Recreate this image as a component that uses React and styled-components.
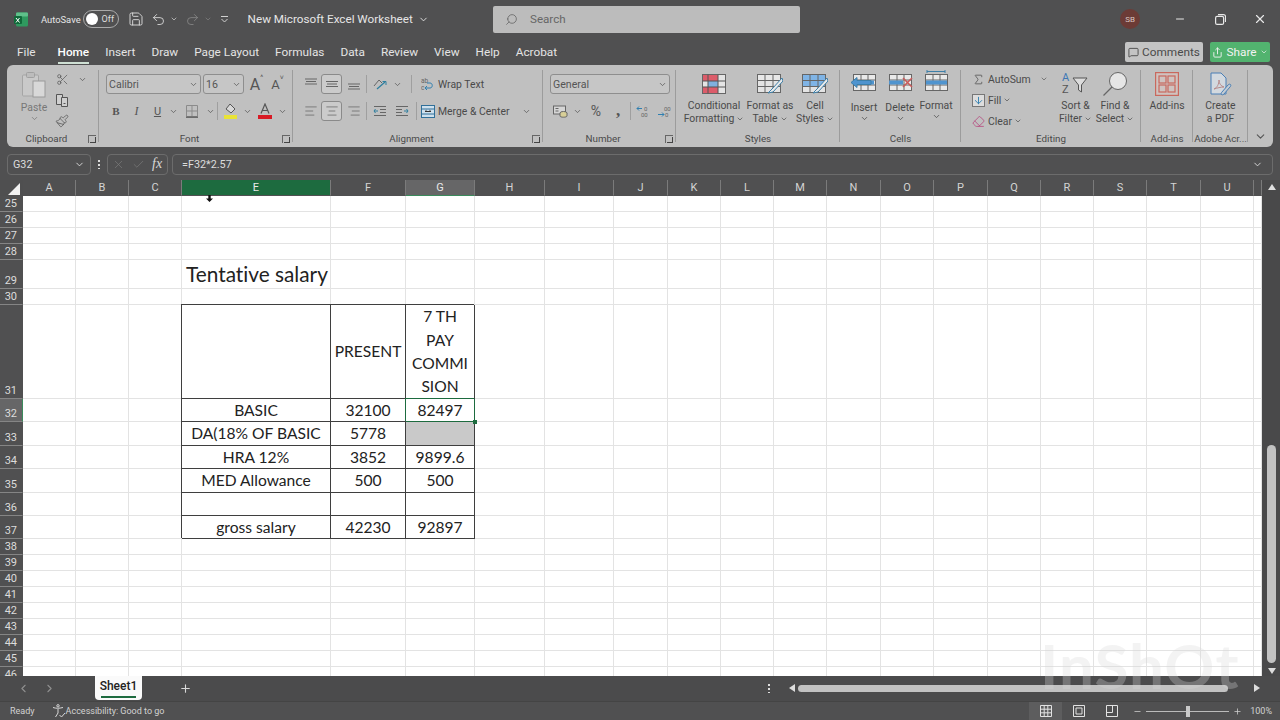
import React from 'react'
import styled, { createGlobalStyle } from 'styled-components'
import {
  Save, Undo2, Redo2, ChevronDown, ChevronLeft, ChevronRight, Search, Minus, X, Check, Plus,
  MessageSquare, Share, Scissors, Paintbrush, AlignLeft, AlignCenter, AlignRight, Sigma,
  ArrowDown, Eraser,
} from 'lucide-react'

const GlobalStyle = createGlobalStyle`
  html, body { margin: 0; padding: 0; background: #4f4f50; }
  * { box-sizing: border-box; }
  body { font-family: Roboto, "Liberation Sans", sans-serif; }
`

const Window = styled.div`
  width: 1280px;
  height: 720px;
  background: #505051;
  display: flex;
  flex-direction: column;
  position: relative;
  overflow: hidden;
`

/* title bar */
const TitleBar = styled.div`
  height: 38px;
  flex: none;
  display: flex;
  align-items: center;
  color: #e6e6e6;
`
const QuickAccess = styled.div`
  width: 493px;
  flex: none;
  padding-left: 14px;
  display: flex;
  align-items: center;
`
const SmallLabel = styled.span`
  font-size: 9.4px;
  margin-left: ${p => p.$ml || 0}px;
  white-space: nowrap;
`
const Toggle = styled.div`
  width: 36px;
  height: 18px;
  margin-left: 2px;
  border: 1px solid #aaa;
  border-radius: 9px;
  display: flex;
  align-items: center;
  padding-left: 2px;
  gap: 4px;
  font-size: 9px;
  color: #ddd;
`
const Knob = styled.span`
  width: 12px;
  height: 12px;
  border-radius: 50%;
  background: #fff;
`
const QatSlot = styled.span`
  width: ${p => p.$w}px;
  display: flex;
  justify-content: center;
  align-items: center;
  color: ${p => (p.$dim ? '#858585' : '#dcdcdc')};
  margin-left: ${p => p.$ml || 0}px;
`
const DocName = styled.span`
  font-size: 11.7px;
  margin-left: 16px;
  white-space: nowrap;
  display: flex;
  align-items: center;
  gap: 5px;
`
const SearchBox = styled.div`
  width: 307px;
  height: 27px;
  background: #bcbcbc;
  border-radius: 2px;
  display: flex;
  align-items: center;
  gap: 12px;
  padding-left: 12px;
  font-size: 11.6px;
  color: #666;
`
const WindowControls = styled.div`
  flex: 1;
  display: flex;
  justify-content: flex-end;
  align-items: center;
`
const Avatar = styled.div`
  width: 20px;
  height: 20px;
  border-radius: 50%;
  background: #6c3b36;
  color: #d9c4c0;
  font-size: 8px;
  display: flex;
  align-items: center;
  justify-content: center;
  margin-right: 20px;
`
const WinButton = styled.div`
  width: 40px;
  display: flex;
  justify-content: center;
  color: #e8e8e8;
`

/* tabs */
const TabBar = styled.div`
  height: 27px;
  flex: none;
  display: flex;
  align-items: flex-start;
  padding: 4px 10px 0 17px;
`
const Tab = styled.div`
  font-size: 11.8px;
  line-height: 20px;
  margin-right: 16px;
  color: ${p => (p.$active ? '#fff' : '#e4e4e4')};
  font-weight: ${p => (p.$active ? 500 : 400)};
  border-bottom: 2px solid ${p => (p.$active ? '#cfe0d4' : 'transparent')};
  white-space: nowrap;
`
const TabSpacer = styled.div`
  flex: 1;
`
const HeadButton = styled.div`
  height: 20px;
  width: ${p => p.$w}px;
  margin-left: ${p => p.$ml || 0}px;
  border-radius: 2px;
  background: ${p => p.$bg};
  color: ${p => p.$color};
  font-size: 11.8px;
  display: flex;
  align-items: center;
  justify-content: center;
  gap: 3px;
`

/* ribbon */
const Ribbon = styled.div`
  height: 82px;
  flex: none;
  margin: 0 7px;
  background: #c0c0c0;
  border-radius: 6px;
  display: flex;
  color: #454545;
  font-size: 10.4px;
`
const Group = styled.div`
  width: ${p => p.$w}px;
  flex: none;
  display: flex;
  flex-direction: column;
  position: relative;
  padding: 4px 0 0;
  &::after {
    content: '';
    position: absolute;
    right: 0;
    top: 5px;
    bottom: 5px;
    width: 1px;
    background: #9c9c9c;
  }
`
const GroupBody = styled.div`
  flex: 1;
  display: flex;
  padding-left: ${p => p.$pl || 0}px;
  min-height: 0;
`
const GroupLabel = styled.div`
  height: 16px;
  line-height: 16px;
  text-align: center;
  font-size: 9.8px;
  color: #4a4a4a;
  white-space: nowrap;
  position: relative;
  padding-right: ${p => (p.$launcher ? 13 : 0)}px;
`
const Launcher = styled.span`
  position: absolute;
  right: 3px;
  top: 4px;
  width: 8px;
  height: 8px;
  border-left: 1px solid #666;
  border-top: 1px solid #666;
  &::after {
    content: '';
    position: absolute;
    right: 0;
    bottom: 0;
    width: 5px;
    height: 5px;
    border-right: 1px solid #444;
    border-bottom: 1px solid #444;
  }
`
const Rows = styled.div`
  display: flex;
  flex-direction: column;
  gap: 7px;
  padding-top: 5px;
`
const Row = styled.div`
  height: 20px;
  display: flex;
  align-items: center;
`
const Slot = styled.span`
  width: ${p => p.$w}px;
  height: 20px;
  flex: none;
  display: flex;
  align-items: center;
  justify-content: center;
  color: #555;
  font-family: ${p => (p.$serif ? '"Liberation Serif", serif' : 'inherit')};
  font-size: ${p => p.$size || 11}px;
  font-weight: ${p => p.$weight || 400};
  font-style: ${p => (p.$italic ? 'italic' : 'normal')};
  text-decoration: ${p => (p.$under ? 'underline' : 'none')};
  border: ${p => (p.$boxed ? '1px solid #8a8a8a' : 'none')};
  border-radius: 3px;
  background: ${p => (p.$boxed ? '#cbcbcb' : 'transparent')};
`
const VSep = styled.span`
  width: 1px;
  height: 18px;
  flex: none;
  background: #9f9f9f;
  margin: 0 ${p => p.$m || 2}px;
`
const Select = styled.div`
  width: ${p => p.$w}px;
  height: 20px;
  flex: none;
  margin-right: ${p => p.$mr || 0}px;
  border: 1px solid #8e8e8e;
  border-radius: 3px;
  background: #c6c6c6;
  display: flex;
  align-items: center;
  justify-content: space-between;
  padding: 0 2px;
  font-size: 10.6px;
  color: #555;
`
const TextAction = styled.span`
  display: flex;
  align-items: center;
  gap: 2px;
  white-space: nowrap;
  font-size: 10.4px;
  color: #4a4a4a;
  margin-left: ${p => p.$ml || 0}px;
`
const BigButton = styled.div`
  width: ${p => p.$w}px;
  flex: none;
  display: flex;
  flex-direction: column;
  align-items: center;
  text-align: center;
  line-height: 13.4px;
  white-space: nowrap;
  color: #4a4a4a;
`
const BigIcon = styled.div`
  height: ${p => p.$h || 30}px;
  padding-top: ${p => p.$pt || 0}px;
  flex: none;
  display: flex;
  align-items: flex-start;
  justify-content: center;
`
const SmallColumn = styled.div`
  width: ${p => p.$w}px;
  flex: none;
  display: flex;
  flex-direction: column;
  align-items: ${p => p.$align || 'center'};
  gap: 1px;
`
const CollapseBox = styled.div`
  flex: 1;
  display: flex;
  align-items: flex-end;
  justify-content: center;
  padding-bottom: 4px;
  color: #555;
`

/* formula bar */
const FormulaBar = styled.div`
  height: 33px;
  flex: none;
  display: flex;
  align-items: center;
  padding: 1px 7px 0;
  color: #ddd;
  font-size: 10.8px;
`
const BarBox = styled.div`
  height: 21px;
  width: ${p => p.$w || 'auto'}px;
  flex: ${p => (p.$grow ? 1 : 'none')};
  margin-left: ${p => p.$ml || 0}px;
  border: 1px solid #6c6c6c;
  border-radius: 4px;
  display: flex;
  align-items: center;
  justify-content: ${p => p.$justify || 'flex-start'};
  padding: 0 ${p => p.$px ?? 5}px;
  gap: ${p => p.$gap || 0}px;
`
const Dots = styled.span`
  width: 2px;
  height: 10px;
  margin-left: ${p => p.$ml ?? 7}px;
  background: radial-gradient(circle, #ddd 1px, transparent 1px) 0 0 / 2px 4px;
`
const FxText = styled.span`
  font-family: "Liberation Serif", serif;
  font-style: italic;
  font-size: 14px;
  color: #d8d8d8;
`

/* sheet */
const SheetArea = styled.div`
  height: 496px;
  flex: none;
  display: flex;
`
const Grid = styled.div`
  width: 1262px;
  height: 496px;
  flex: none;
  display: grid;
  grid-template-columns: ${p => p.$cols};
  grid-template-rows: ${p => p.$rows};
  overflow: hidden;
  background: #fff;
`
const Corner = styled.div`
  background: #4f4f50;
  display: flex;
  justify-content: flex-end;
  align-items: flex-end;
  padding: 0 3px 1px 0;
`
const ColHead = styled.div`
  background: ${p => (p.$state === 'green' ? '#1d6b3f' : p.$state === 'light' ? '#666667' : '#505051')};
  color: ${p => (p.$state ? '#e9e9e9' : '#d4d4d4')};
  border-right: 1px solid #7b7b7b;
  border-bottom: 1px solid ${p => (p.$state === 'light' ? '#3b8a5c' : '#505051')};
  font-size: 11px;
  line-height: 15px;
  text-align: center;
`
const RowHead = styled.div`
  background: ${p => (p.$active ? '#666667' : '#505051')};
  color: #dcdcdc;
  border-bottom: 1px solid #858585;
  border-right: 1px solid ${p => (p.$active ? '#3b8a5c' : '#505051')};
  font-size: 11px;
  padding-right: 5px;
  display: flex;
  align-items: flex-end;
  justify-content: flex-end;
  line-height: 15px;
`
const Cell = styled.div`
  border-right: 1px solid ${p => (p.$boxed ? '#3f3f3f' : '#e3e3e3')};
  border-bottom: 1px solid ${p => (p.$boxed ? '#3f3f3f' : '#e3e3e3')};
  background: ${p => (p.$fill ? '#c9c9c9' : '#fff')};
  box-shadow: ${p => (p.$boxed ? '-1px -1px 0 #3f3f3f' : 'none')};
  position: ${p => (p.$boxed ? 'relative' : 'static')};
  z-index: ${p => (p.$boxed ? 1 : 'auto')};
  padding-top: ${p => (p.$boxed ? 1 : 0)}px;
  font-family: Lato, "Liberation Sans", sans-serif;
  font-variant-ligatures: none;
  font-size: 15.6px;
  color: #222;
  display: flex;
  align-items: center;
  justify-content: center;
  text-align: center;
  line-height: 23.4px;
  white-space: pre-line;
  min-width: 0;
`
const TitleCell = styled(Cell)`
  justify-content: flex-start;
  padding-left: 4px;
  font-size: 20.8px;
  white-space: nowrap;
  overflow: visible;
`
const SelectedCell = styled(Cell)`
  z-index: 2;
  border-right-color: #1d6b3f;
  border-bottom-color: #1d6b3f;
  box-shadow: -1px -1px 0 #1d6b3f;
  &::after {
    content: '';
    position: absolute;
    right: -3px;
    bottom: -3px;
    width: 4px;
    height: 4px;
    background: #1d6b3f;
  }
`
const ColumnCursor = styled.span`
  position: absolute;
  left: 206px;
  top: 195px;
  z-index: 3;
  display: flex;
`
const VScroll = styled.div`
  flex: 1;
  display: flex;
  flex-direction: column;
  align-items: center;
  padding: 4px 0 2px 1px;
  background: #49494a;
`
const Arrow = styled.span`
  width: 0;
  height: 0;
  border-left: 4px solid transparent;
  border-right: 4px solid transparent;
  ${p => (p.$down ? 'border-top: 6px solid #ddd;' : 'border-bottom: 6px solid #ddd;')}
  flex: none;
`
const VSpacer = styled.div`
  flex: 1;
`
const VThumb = styled.div`
  width: 9px;
  height: 218px;
  border-radius: 5px;
  background: #c2c2c2;
  margin-bottom: 5px;
`

/* bottom */
const SheetBar = styled.div`
  height: 26px;
  flex: none;
  background: #4b4b4c;
  display: flex;
  align-items: flex-start;
  color: #8f8f8f;
  border-bottom: 1px solid #444;
`
const NavArrows = styled.div`
  width: 95px;
  height: 24px;
  flex: none;
  display: flex;
  align-items: center;
  padding-left: 17px;
  gap: 13px;
`
const SheetTab = styled.div`
  width: 47px;
  height: 24px;
  flex: none;
  background: #fafafa;
  border-radius: 0 0 4px 4px;
  color: #222;
  font-size: 12px;
  font-weight: 500;
  text-align: center;
  line-height: 21px;
  position: relative;
  &::after {
    content: '';
    position: absolute;
    left: 6px;
    right: 6px;
    bottom: 2px;
    height: 2px;
    background: #1d6b3f;
  }
`
const AddSheet = styled.div`
  width: 86px;
  height: 24px;
  flex: none;
  display: flex;
  align-items: center;
  justify-content: center;
  color: #d8d8d8;
`
const TabsGap = styled.div`
  flex: 1;
`
const ScrollDots = styled.div`
  height: 24px;
  width: 30px;
  flex: none;
  display: flex;
  align-items: center;
  justify-content: center;
`
const HScroll = styled.div`
  width: 490px;
  height: 24px;
  flex: none;
  margin-right: 6px;
  display: flex;
  align-items: center;
  padding-left: 5px;
`
const HArrow = styled.span`
  width: 0;
  height: 0;
  flex: none;
  border-top: 4px solid transparent;
  border-bottom: 4px solid transparent;
  ${p => (p.$right ? 'border-left: 6px solid #ddd;' : 'border-right: 6px solid #ddd;')}
`
const HThumb = styled.div`
  width: 430px;
  height: 7px;
  margin: 0 26px 0 3px;
  border-radius: 4px;
  background: #c2c2c2;
`
const StatusBar = styled.div`
  flex: 1;
  display: flex;
  align-items: center;
  padding: 0 8px 0 10px;
  font-size: 9px;
  color: #d2d2d2;
  white-space: nowrap;
`
const StatusGroup = styled.div`
  display: flex;
  align-items: center;
  margin-left: ${p => p.$ml || 0}px;
  gap: ${p => p.$gap || 0}px;
`
const ViewGroup = styled.div`
  display: flex;
  align-items: center;
  margin-left: auto;
  margin-right: 5px;
`
const ViewButton = styled.div`
  width: 33px;
  height: 18px;
  display: flex;
  align-items: center;
  justify-content: center;
  background: ${p => (p.$active ? '#5d5d5e' : 'transparent')};
  color: #e2e2e2;
`
const ZoomTrack = styled.div`
  width: 83px;
  height: 1px;
  margin: 0 4px;
  background: #bbb;
  position: relative;
`
const ZoomThumb = styled.span`
  position: absolute;
  left: 40px;
  top: -5px;
  width: 4px;
  height: 11px;
  background: #c9c9c9;
`
const Watermark = styled.div`
  position: absolute;
  left: 1040px;
  top: 625px;
  font-family: Lato, "Liberation Sans", sans-serif;
  font-weight: 700;
  font-size: 62px;
  line-height: 80px;
  letter-spacing: 1px;
  color: rgba(214, 214, 214, 0.3);
  pointer-events: none;
  z-index: 5;
`

const Chev = ({ size = 9, color = 'currentColor' }) => <ChevronDown size={size} color={color} strokeWidth={2} />

const ExcelLogo = () => (
  <svg width="14" height="15" viewBox="0 0 14 15">
    <rect x="2" y="0.5" width="12" height="14" rx="1.5" fill="#2f9a5f" />
    <rect x="2" y="0.5" width="12" height="4" rx="1" fill="#5fc08a" />
    <rect x="0" y="4" width="8" height="8" rx="1" fill="#106a3a" />
    <path d="M2 6l3.5 4.5M5.5 6L2 10.5" stroke="#fff" strokeWidth="1" />
  </svg>
)
const QatMenu = () => (
  <svg width="9" height="9" viewBox="0 0 9 9" fill="none" stroke="#d0d0d0">
    <path d="M1 1.5h7" /><path d="M1.5 4l3 3 3-3" />
  </svg>
)
const PasteIcon = () => (
  <svg width="24" height="26" viewBox="0 0 24 26">
    <rect x="0.5" y="3" width="16" height="21" rx="1" fill="#c9c9c9" stroke="#a5a5a5" />
    <rect x="4.5" y="0.5" width="8" height="5" rx="1" fill="#bcbcbc" stroke="#a0a0a0" />
    <rect x="11" y="9" width="12" height="16" fill="#d8d8d8" stroke="#9a9a9a" />
  </svg>
)
const CopyIcon = () => (
  <svg width="15" height="15" viewBox="0 0 15 15" fill="#cfcfcf" stroke="#555">
    <path d="M1.5 1.5h6v10h-6z" /><path d="M6.5 4.5h6v9h-6z" /><path d="M8.5 10.5h2" />
  </svg>
)
const GrowFont = ({ down }) => (
  <Slot $w={21} $size={down ? 13 : 16}>A<sub style={{ fontSize: 7, alignSelf: 'flex-start' }}>{down ? '˅' : '^'}</sub></Slot>
)
const BordersIcon = () => (
  <svg width="13" height="13" viewBox="0 0 13 13" fill="none" stroke="#8b8b8b">
    <path d="M.5.5h11v11h-11zM6 .5v11M.5 6h11" /><path d="M0 12.2h12" stroke="#444" />
  </svg>
)
const FillIcon = () => (
  <svg width="14" height="16" viewBox="0 0 14 16">
    <path d="M6 1l5 5-4 4-5-4z" fill="#d8d8d8" stroke="#555" />
    <rect x="0" y="12" width="13" height="4" fill="#e9e337" />
  </svg>
)
const FontColorIcon = () => (
  <svg width="14" height="16" viewBox="0 0 14 16" fill="none">
    <path d="M3 10.5L7 1l4 9.5M4.5 7.5h5" stroke="#555" strokeWidth="1.2" />
    <rect x="0" y="12" width="14" height="4" fill="#d81a24" />
  </svg>
)
const VAlignLines = ({ offset }) => (
  <svg width="14" height="12" viewBox="0 0 14 12" stroke="#666" strokeWidth="1.1">
    <path d={`M1 ${1 + offset}h12M2 ${3.5 + offset}h10M1 ${6 + offset}h12`} />
  </svg>
)
const OrientIcon = () => (
  <svg width="14" height="13" viewBox="0 0 14 13" fill="none">
    <path d="M1 8l5-6 3 3" stroke="#666" /><path d="M4 11l8-7" stroke="#2f7f9f" strokeWidth="1.3" />
    <path d="M9.5 3.5H13V7" stroke="#2f7f9f" />
  </svg>
)
const IndentIcon = ({ flip }) => (
  <svg width="13" height="12" viewBox="0 0 13 12" fill="none" stroke="#666" style={{ transform: flip ? 'scaleX(-1)' : 'none' }}>
    <path d="M1 1.5h12M7 4.5h6M7 7.5h6M1 10.5h12" />
    <path d="M5 6H1M2.5 4L1 6l1.5 2" stroke="#2f7f9f" />
  </svg>
)
const WrapIcon = () => (
  <svg width="13" height="14" viewBox="0 0 13 14" fill="none">
    <text x="0" y="6" fontSize="6.5" fill="#666" fontFamily="Roboto">ab</text>
    <text x="0" y="13" fontSize="6.5" fill="#666" fontFamily="Roboto">c</text>
    <path d="M4 11h5c3 0 3-5 0-5H6M6 9l-2 2 2 2" stroke="#2f7fb0" />
  </svg>
)
const MergeIcon = () => (
  <svg width="14" height="13" viewBox="0 0 14 13" fill="#cfe1ee" stroke="#2f6f99">
    <rect x=".5" y=".5" width="13" height="12" />
    <path d="M.5 4h13M.5 9h13" /><path d="M4 6.5h6M4 6.5l1.5-1.2M10 6.5L8.5 5.3" stroke="#333" />
  </svg>
)
const AccountingIcon = () => (
  <svg width="15" height="13" viewBox="0 0 15 13" fill="none" stroke="#666">
    <rect x=".5" y="1" width="12" height="8" fill="#d5d5d5" />
    <path d="M2.5 3.5h3M2.5 6h3" />
    <ellipse cx="10.5" cy="8" rx="3.5" ry="1.5" fill="#d8cf97" />
    <path d="M7 8v3c0 1.6 7 1.6 7 0V8" fill="#d8cf97" />
  </svg>
)
const DecimalIcon = ({ more }) => (
  <svg width="14" height="13" viewBox="0 0 14 13">
    <text x={more ? 8 : 7} y="5.5" fontSize="6" fill="#666" fontFamily="Roboto">{more ? '0' : '00'}</text>
    <text x={more ? 5 : 8} y="12" fontSize="6" fill="#666" fontFamily="Roboto">{more ? '00' : '0'}</text>
    <path d={more ? 'M1 3.5h5M1 3.5l2-2M1 3.5l2 2' : 'M1 9.5h6M7 9.5l-2-2M7 9.5l-2 2'} stroke="#2f7fb0" fill="none" />
  </svg>
)
const TableGlyph = ({ head = '#e8e8e8', band, brush }) => (
  <svg width="26" height="20" viewBox="0 0 26 20" fill="none">
    <rect x=".5" y=".5" width="23" height="18" fill="#e4e4e4" stroke="#666" />
    <rect x="1" y="1" width="22" height="5" fill={head} />
    {band && <rect x="1" y="7" width="22" height="5" fill={band} />}
    <path d="M.5 6.5h23M.5 12.5h23M8 .5v18M16 .5v18" stroke="#666" />
    {brush && <path d="M25 4L15 15l-4 4 5-1L26 7z" fill="#e9e9e9" stroke="#3d7fa8" />}
  </svg>
)
const CondIcon = () => (
  <svg width="24" height="20" viewBox="0 0 24 20" fill="none">
    <rect x=".5" y=".5" width="23" height="19" fill="#e4e4e4" stroke="#666" />
    <rect x="1" y="1" width="15" height="6" fill="#dc5c6a" />
    <rect x="1" y="13" width="15" height="6" fill="#dc5c6a" />
    <rect x="6" y="7" width="10" height="6" fill="#7fb0dd" />
    <path d="M.5 7h23M.5 13h23M6 .5v19M16 .5v19" stroke="#555" />
  </svg>
)
const CellOpIcon = ({ kind }) => (
  <svg width="28" height="22" viewBox="0 0 28 22" fill="none">
    {kind === 'format' && <path d="M5 1.5h18M5 0v3M23 0v3" stroke="#3d7fa8" />}
    <rect x="3.5" y="4.5" width="22" height="16" fill="#e9e9e9" stroke="#666" />
    <path d="M3.5 10h22M3.5 15h22M11 4.5v16M18 4.5v16" stroke="#666" />
    <rect x={kind === 'format' ? 4 : 3} y="10.5" width={kind === 'delete' ? 14 : 21} height="4" fill="#4f94cf" />
    {kind === 'insert' && <path d="M1 12.5l6-5v3h14v4H7v3z" fill="#4f94cf" stroke="#3d7fa8" />}
    {kind === 'delete' && <path d="M17 8l9 9M26 8l-9 9" stroke="#c85a5a" strokeWidth="1.6" />}
  </svg>
)
const SortIcon = () => (
  <svg width="28" height="24" viewBox="0 0 28 24" fill="none">
    <text x="0" y="10" fontSize="11" fill="#3d78b5" fontFamily="Roboto">A</text>
    <text x="0" y="22" fontSize="11" fill="#555" fontFamily="Roboto">Z</text>
    <path d="M11 7h14l-5.5 7v7l-3-2v-5z" fill="#dcdcdc" stroke="#555" />
  </svg>
)
const FindIcon = () => (
  <svg width="26" height="26" viewBox="0 0 26 26" fill="none" stroke="#666">
    <circle cx="16" cy="10" r="8.5" fill="#e6e6e6" />
    <path d="M10 16L1.5 24.5" strokeWidth="1.3" />
  </svg>
)
const AddInsIcon = () => (
  <svg width="24" height="24" viewBox="0 0 24 24" fill="none" stroke="#c9685d" strokeWidth="1.2">
    <rect x=".6" y=".6" width="22.8" height="22.8" fill="#cfc3c0" />
    <rect x="4" y="4" width="7" height="7" /><rect x="13" y="4" width="7" height="7" />
    <rect x="4" y="13" width="7" height="7" /><rect x="13" y="13" width="7" height="7" />
  </svg>
)
const PdfIcon = () => (
  <svg width="22" height="26" viewBox="0 0 22 26" fill="none" stroke="#4a7fb5">
    <path d="M1 1h10l5 5v16H1z" fill="#d3d9df" />
    <path d="M4 17c3-1 5-5 5-9 0 4 2 6 5 7-3 0-7 1-10 2z" stroke="#b78a8a" />
    <path d="M12 20l6-7c2-2 4 0 2 2l-6 7c-2 2-4 0-2-2z" fill="#c3ccd4" />
  </svg>
)
const A11yIcon = () => (
  <svg width="14" height="14" viewBox="0 0 14 14" fill="none" stroke="#d8d8d8">
    <circle cx="6" cy="1.8" r="1.2" /><path d="M1 3.5c3 1 6 1 10 0M6 5v4M6 9l-2.5 4" />
    <path d="M7.5 11l2 2 3.5-4" />
  </svg>
)
const NormalView = () => (
  <svg width="12" height="12" viewBox="0 0 12 12" fill="none" stroke="currentColor">
    <path d="M.5.5h11v11H.5zM.5 4.2h11M.5 7.8h11M4.2.5v11M7.8.5v11" />
  </svg>
)
const PageView = () => (
  <svg width="12" height="12" viewBox="0 0 12 12" fill="none" stroke="currentColor">
    <path d="M.5.5h11v11H.5z" /><path d="M3 3h6v6H3z" />
  </svg>
)
const BreakView = () => (
  <svg width="12" height="12" viewBox="0 0 12 12" fill="none" stroke="currentColor">
    <path d="M.5.5h11v11H.5zM.5 7.5h6V.5" />
  </svg>
)
const RestoreIcon = () => (
  <svg width="11" height="11" viewBox="0 0 11 11" fill="none" stroke="currentColor" strokeWidth="1.2">
    <rect x=".6" y="2.4" width="8" height="8" rx="1.5" /><path d="M3 .6h5.5c1 0 2 1 2 2V8" />
  </svg>
)
const CornerTriangle = () => (
  <svg width="12" height="12" viewBox="0 0 12 12"><path d="M12 0v12H0z" fill="#f2f2f2" /></svg>
)
const DownCursor = () => (
  <svg width="7" height="7" viewBox="0 0 7 7"><path d="M2.3 0h2.4v3.6H7L3.5 7 0 3.6h2.3z" fill="#111" /></svg>
)

const TABS = ['Home', 'Insert', 'Draw', 'Page Layout', 'Formulas', 'Data', 'Review', 'View', 'Help', 'Acrobat']

const COLS = [
  ['A', 53], ['B', 53], ['C', 53], ['E', 149], ['F', 75], ['G', 69], ['H', 70], ['I', 69], ['J', 54], ['K', 53],
  ['L', 53], ['M', 53], ['N', 54], ['O', 53], ['P', 54], ['Q', 53], ['R', 53], ['S', 53], ['T', 54], ['U', 53], ['', 8],
]
const ROWS = [
  [25, 16], [26, 16], [27, 16], [28, 16], [29, 29], [30, 16], [31, 94], [32, 23], [33, 24], [34, 23], [35, 24],
  [36, 23], [37, 23], [38, 16], [39, 16], [40, 16], [41, 16], [42, 16], [43, 16], [44, 16], [45, 16], [46, 16],
]
const TABLE = {
  31: ['', 'PRESENT', '7 TH\nPAY\nCOMMI\nSION'],
  32: ['BASIC', '32100', '82497'],
  33: ['DA(18% OF BASIC', '5778', ''],
  34: ['HRA 12%', '3852', '9899.6'],
  35: ['MED Allowance', '500', '500'],
  36: ['', '', ''],
  37: ['gross salary', '42230', '92897'],
}
const COL_STATE = { E: 'green', G: 'light' }

const renderCell = (col, row) => {
  const key = `${col}${row}`
  if (key === 'E29') return <TitleCell key={key}>Tentative salary</TitleCell>
  const idx = ['E', 'F', 'G'].indexOf(col)
  if (TABLE[row] && idx >= 0) {
    if (key === 'G32') return <SelectedCell key={key} $boxed>{TABLE[row][idx]}</SelectedCell>
    return <Cell key={key} $boxed $fill={key === 'G33'}>{TABLE[row][idx]}</Cell>
  }
  return <Cell key={key} />
}

const App = () => (
  <Window>
    <GlobalStyle />
    <TitleBar>
      <QuickAccess>
        <ExcelLogo />
        <SmallLabel $ml={13}>AutoSave</SmallLabel>
        <Toggle><Knob />Off</Toggle>
        <QatSlot $w={20} $ml={7}><Save size={16} strokeWidth={1.4} /></QatSlot>
        <QatSlot $w={18} $ml={4}><Undo2 size={15} strokeWidth={1.4} /></QatSlot>
        <QatSlot $w={12}><Chev size={8} /></QatSlot>
        <QatSlot $w={18} $ml={4} $dim><Redo2 size={15} strokeWidth={1.4} /></QatSlot>
        <QatSlot $w={12} $dim><Chev size={8} /></QatSlot>
        <QatSlot $w={14} $ml={4}><QatMenu /></QatSlot>
        <DocName>New Microsoft Excel Worksheet <ChevronDown size={11} /></DocName>
      </QuickAccess>
      <SearchBox><Search size={13} strokeWidth={1.5} style={{ transform: 'scaleX(-1)' }} />Search</SearchBox>
      <WindowControls>
        <Avatar>SB</Avatar>
        <WinButton><Minus size={12} /></WinButton>
        <WinButton><RestoreIcon /></WinButton>
        <WinButton><X size={14} /></WinButton>
      </WindowControls>
    </TitleBar>

    <TabBar>
      <Tab style={{ marginRight: 22 }}>File</Tab>
      {TABS.map(t => <Tab key={t} $active={t === 'Home'}>{t}</Tab>)}
      <TabSpacer />
      <HeadButton $w={78} $bg="#c4c4c4" $color="#4a4a4a"><MessageSquare size={11} />Comments</HeadButton>
      <HeadButton $w={60} $ml={7} $bg="#52b36f" $color="#f2f2f2"><Share size={11} />Share <Chev size={8} /></HeadButton>
    </TabBar>

    <Ribbon>
      <Group $w={92}>
        <GroupBody $pl={10}>
          <BigButton $w={34}>
            <BigIcon $h={32} $pt={3}><PasteIcon /></BigIcon>
            <span style={{ color: '#777' }}>Paste</span>
            <Chev color="#777" />
          </BigButton>
          <SmallColumn $w={22}>
            <Slot $w={20}><Scissors size={13} strokeWidth={1.3} /></Slot>
            <Slot $w={20}><CopyIcon /></Slot>
            <Slot $w={20}><Paintbrush size={14} strokeWidth={1.3} /></Slot>
          </SmallColumn>
          <Slot $w={18}><Chev /></Slot>
        </GroupBody>
        <GroupLabel $launcher>Clipboard<Launcher /></GroupLabel>
      </Group>

      <Group $w={194}>
        <GroupBody $pl={7}>
          <Rows>
            <Row>
              <Select $w={95} $mr={2}>Calibri<Chev /></Select>
              <Select $w={41} $mr={2}>16<Chev /></Select>
              <GrowFont />
              <GrowFont down />
            </Row>
            <Row>
              <Slot $w={20} $serif $weight={700} $size={11}>B</Slot>
              <Slot $w={21} $serif $italic $size={12}>I</Slot>
              <Slot $w={21} $under>U</Slot>
              <Slot $w={11}><Chev /></Slot>
              <Slot $w={26}><BordersIcon /></Slot>
              <Slot $w={10}><Chev /></Slot>
              <VSep />
              <Slot $w={22}><FillIcon /></Slot>
              <Slot $w={10}><Chev /></Slot>
              <Slot $w={26}><FontColorIcon /></Slot>
              <Slot $w={9}><Chev /></Slot>
            </Row>
          </Rows>
        </GroupBody>
        <GroupLabel $launcher>Font<Launcher /></GroupLabel>
      </Group>

      <Group $w={250}>
        <GroupBody $pl={7}>
          <Rows>
            <Row>
              <Slot $w={21}><VAlignLines offset={0} /></Slot>
              <Slot $w={21} $boxed><VAlignLines offset={2.5} /></Slot>
              <Slot $w={23}><VAlignLines offset={5} /></Slot>
              <VSep $m={1} />
              <Slot $w={23}><OrientIcon /></Slot>
              <Slot $w={12}><Chev /></Slot>
              <VSep $m={8} />
              <Slot $w={14}><WrapIcon /></Slot>
              <TextAction $ml={4}>Wrap Text</TextAction>
            </Row>
            <Row>
              <Slot $w={21}><AlignLeft size={14} strokeWidth={1.1} /></Slot>
              <Slot $w={21} $boxed><AlignCenter size={14} strokeWidth={1.1} /></Slot>
              <Slot $w={23}><AlignRight size={14} strokeWidth={1.1} /></Slot>
              <VSep $m={1} />
              <Slot $w={23}><IndentIcon /></Slot>
              <Slot $w={22}><IndentIcon flip /></Slot>
              <VSep $m={3} />
              <Slot $w={16}><MergeIcon /></Slot>
              <TextAction $ml={2}>Merge &amp; Center</TextAction>
              <Slot $w={34}><Chev /></Slot>
            </Row>
          </Rows>
        </GroupBody>
        <GroupLabel $launcher>Alignment<Launcher /></GroupLabel>
      </Group>

      <Group $w={133}>
        <GroupBody $pl={7}>
          <Rows>
            <Row><Select $w={120}>General<Chev /></Select></Row>
            <Row>
              <Slot $w={20}><AccountingIcon /></Slot>
              <Slot $w={14}><Chev /></Slot>
              <Slot $w={24} $size={14}>%</Slot>
              <Slot $w={20} $weight={700} $size={17} $serif>,</Slot>
              <VSep $m={2} />
              <Slot $w={20}><DecimalIcon more /></Slot>
              <Slot $w={22}><DecimalIcon /></Slot>
            </Row>
          </Rows>
        </GroupBody>
        <GroupLabel $launcher>Number<Launcher /></GroupLabel>
      </Group>

      <Group $w={164}>
        <GroupBody $pl={8}>
          <BigButton $w={60}>
            <BigIcon $pt={5}><CondIcon /></BigIcon>
            <span>Conditional</span>
            <TextAction>Formatting <Chev size={8} /></TextAction>
          </BigButton>
          <BigButton $w={52}>
            <BigIcon $pt={5}><TableGlyph brush /></BigIcon>
            <span>Format as</span>
            <TextAction>Table <Chev size={8} /></TextAction>
          </BigButton>
          <BigButton $w={38}>
            <BigIcon $pt={5}><TableGlyph head="#7fb4e6" band="#7fb4e6" brush /></BigIcon>
            <span>Cell</span>
            <TextAction>Styles <Chev size={8} /></TextAction>
          </BigButton>
        </GroupBody>
        <GroupLabel>Styles</GroupLabel>
      </Group>

      <Group $w={121}>
        <GroupBody $pl={6}>
          <BigButton $w={36}>
            <BigIcon $h={32} $pt={1}><CellOpIcon kind="insert" /></BigIcon>
            <span>Insert</span>
            <Chev />
          </BigButton>
          <BigButton $w={36}>
            <BigIcon $h={32} $pt={1}><CellOpIcon kind="delete" /></BigIcon>
            <span>Delete</span>
            <Chev />
          </BigButton>
          <BigButton $w={36}>
            <BigIcon $pt={1}><CellOpIcon kind="format" /></BigIcon>
            <span>Format</span>
            <Chev />
          </BigButton>
        </GroupBody>
        <GroupLabel>Cells</GroupLabel>
      </Group>

      <Group $w={180}>
        <GroupBody $pl={11}>
          <SmallColumn $w={84} $align="flex-start">
            <Row><Sigma size={13} strokeWidth={1.3} /><TextAction $ml={3}>AutoSum</TextAction><Slot $w={27}><Chev size={8} /></Slot></Row>
            <Row><ArrowDown size={13} color="#2f7fb0" style={{ background: '#ddd', border: '1px solid #777' }} /><TextAction $ml={3}>Fill <Chev size={8} /></TextAction></Row>
            <Row><Eraser size={13} color="#b5487e" strokeWidth={1.5} /><TextAction $ml={3}>Clear <Chev size={8} /></TextAction></Row>
          </SmallColumn>
          <BigButton $w={39}>
            <BigIcon $pt={2}><SortIcon /></BigIcon>
            <span>Sort &amp;</span>
            <TextAction>Filter <Chev size={8} /></TextAction>
          </BigButton>
          <BigButton $w={40}>
            <BigIcon $pt={2}><FindIcon /></BigIcon>
            <span>Find &amp;</span>
            <TextAction>Select <Chev size={8} /></TextAction>
          </BigButton>
        </GroupBody>
        <GroupLabel>Editing</GroupLabel>
      </Group>

      <Group $w={52}>
        <GroupBody>
          <BigButton $w={52}>
            <BigIcon $pt={3}><AddInsIcon /></BigIcon>
            <span>Add-ins</span>
          </BigButton>
        </GroupBody>
        <GroupLabel>Add-ins</GroupLabel>
      </Group>

      <Group $w={55}>
        <GroupBody>
          <BigButton $w={55}>
            <BigIcon $pt={3}><PdfIcon /></BigIcon>
            <span>Create</span>
            <span>a PDF</span>
          </BigButton>
        </GroupBody>
        <GroupLabel>Adobe Acr...</GroupLabel>
      </Group>

      <CollapseBox><ChevronDown size={13} /></CollapseBox>
    </Ribbon>

    <FormulaBar>
      <BarBox $w={84} $justify="space-between">G32 <Chev size={11} /></BarBox>
      <Dots />
      <BarBox $w={61} $ml={7} $gap={7} $px={4}>
        <X size={13} color="#7d7d7d" strokeWidth={1.2} />
        <Check size={13} color="#7d7d7d" strokeWidth={1.2} />
        <FxText>fx</FxText>
      </BarBox>
      <BarBox $grow $ml={4} $justify="space-between" $px={9}>=F32*2.57 <Chev size={11} /></BarBox>
    </FormulaBar>

    <SheetArea>
      <Grid
        $cols={`23px ${COLS.map(c => `${c[1]}px`).join(' ')}`}
        $rows={`16px ${ROWS.map(r => `${r[1]}px`).join(' ')}`}
      >
        <Corner><CornerTriangle /></Corner>
        {COLS.map(([l]) => <ColHead key={l || 'rest'} $state={COL_STATE[l]}>{l}</ColHead>)}
        {ROWS.map(([n]) => (
          <React.Fragment key={n}>
            <RowHead $active={n === 32}>{n}</RowHead>
            {COLS.map(([l]) => renderCell(l, n))}
          </React.Fragment>
        ))}
      </Grid>
      <VScroll>
        <Arrow />
        <VSpacer />
        <VThumb />
        <Arrow $down />
      </VScroll>
    </SheetArea>
    <ColumnCursor><DownCursor /></ColumnCursor>

    <SheetBar>
      <NavArrows><ChevronLeft size={13} /><ChevronRight size={13} /></NavArrows>
      <SheetTab>Sheet1</SheetTab>
      <AddSheet><Plus size={13} /></AddSheet>
      <TabsGap />
      <ScrollDots><Dots $ml={0} /></ScrollDots>
      <HScroll>
        <HArrow />
        <HThumb />
        <HArrow $right />
      </HScroll>
    </SheetBar>

    <StatusBar>
      Ready
      <StatusGroup $ml={17} $gap={0}><A11yIcon />Accessibility: Good to go</StatusGroup>
      <ViewGroup>
        <ViewButton $active><NormalView /></ViewButton>
        <ViewButton><PageView /></ViewButton>
        <ViewButton><BreakView /></ViewButton>
      </ViewGroup>
      <StatusGroup>
        <Minus size={9} />
        <ZoomTrack><ZoomThumb /></ZoomTrack>
        <Plus size={9} />
        <StatusGroup $ml={8}>100%</StatusGroup>
      </StatusGroup>
    </StatusBar>
    <Watermark>InShOt</Watermark>
  </Window>
)

export default App
